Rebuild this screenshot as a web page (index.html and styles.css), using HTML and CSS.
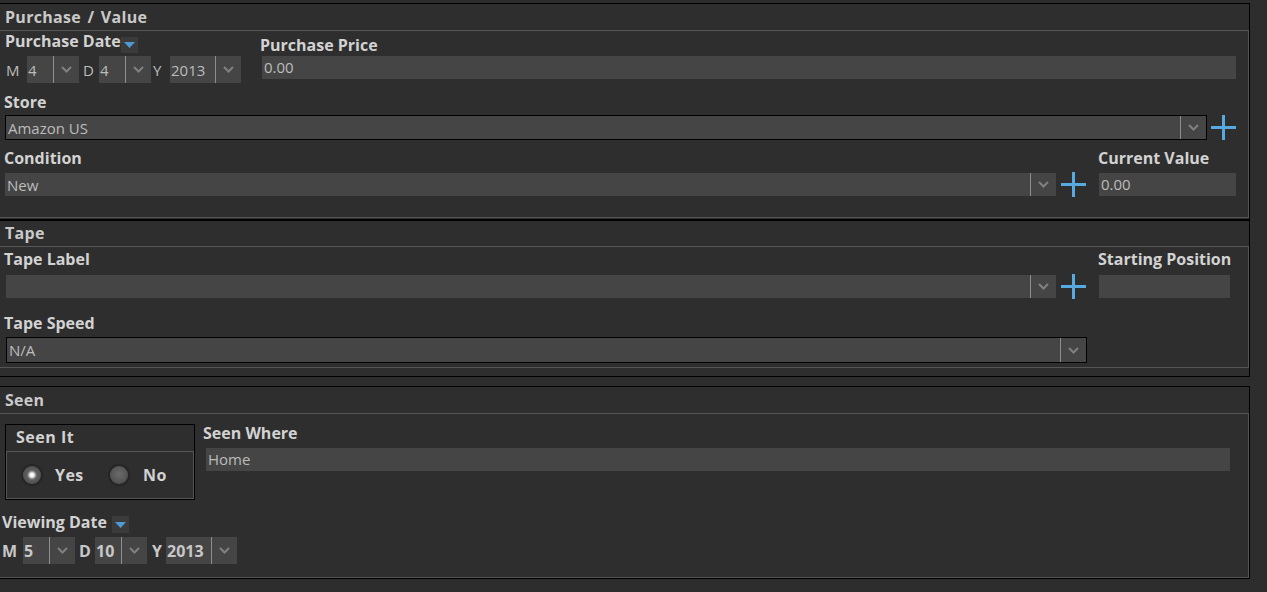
FILE: index.html
```html
<!DOCTYPE html>
<html>
<head>
<meta charset="utf-8">
<link rel="stylesheet" href="styles.css">
</head>
<body>
<section class="panel panel-purchase">
  <div class="panel-head">Purchase / Value</div>
  <div class="panel-body body-purchase">
    <div class="row-top">
      <div class="date-col">
        <div class="date-label">
          <span class="label">Purchase Date</span>
          <span class="tri-btn"><svg width="11" height="6" viewBox="0 0 11 6"><polygon points="0,0 11,0 5.5,6" fill="#4d9bd6"/></svg></span>
        </div>
        <div class="date-row">
          <span class="dl dl-m">M</span>
          <div class="dsel dsel-sm"><span class="dval">4</span><span class="arrow"><svg width="11" height="7" viewBox="0 0 11 7"><polyline points="1,1 5.5,5.5 10,1" fill="none" stroke="#808080" stroke-width="2"/></svg></span></div>
          <span class="dl dl-d">D</span>
          <div class="dsel dsel-sm"><span class="dval">4</span><span class="arrow"><svg width="11" height="7" viewBox="0 0 11 7"><polyline points="1,1 5.5,5.5 10,1" fill="none" stroke="#808080" stroke-width="2"/></svg></span></div>
          <span class="dl dl-y">Y</span>
          <div class="dsel dsel-lg"><span class="dval">2013</span><span class="arrow"><svg width="11" height="7" viewBox="0 0 11 7"><polyline points="1,1 5.5,5.5 10,1" fill="none" stroke="#808080" stroke-width="2"/></svg></span></div>
        </div>
      </div>
      <div class="price-col">
        <div class="label">Purchase Price</div>
        <div class="field field-price">0.00</div>
      </div>
    </div>

    <div class="label store-label">Store</div>
    <div class="store-row">
      <div class="select select-bordered"><span class="val">Amazon US</span><span class="arrow"><svg width="11" height="7" viewBox="0 0 11 7"><polyline points="1,1 5.5,5.5 10,1" fill="none" stroke="#808080" stroke-width="2"/></svg></span></div>
      <span class="plus"><svg width="25" height="25" viewBox="0 0 25 25"><rect x="0" y="11" width="25" height="3" fill="#58a9e0"/><rect x="11" y="0" width="3" height="25" fill="#58a9e0"/></svg></span>
    </div>

    <div class="split-row cond-row">
      <div class="left-col">
        <div class="label">Condition</div>
        <div class="sel-row">
          <div class="select"><span class="val">New</span><span class="arrow"><svg width="11" height="7" viewBox="0 0 11 7"><polyline points="1,1 5.5,5.5 10,1" fill="none" stroke="#808080" stroke-width="2"/></svg></span></div>
          <span class="plus"><svg width="25" height="25" viewBox="0 0 25 25"><rect x="0" y="11" width="25" height="3" fill="#58a9e0"/><rect x="11" y="0" width="3" height="25" fill="#58a9e0"/></svg></span>
        </div>
      </div>
      <div class="right-col">
        <div class="label">Current Value</div>
        <div class="field field-value">0.00</div>
      </div>
    </div>
  </div>
</section>

<section class="panel panel-tape">
  <div class="panel-head head-tape">Tape</div>
  <div class="panel-body body-tape">
    <div class="split-row tape-row">
      <div class="left-col tape-left">
        <div class="label">Tape Label</div>
        <div class="sel-row">
          <div class="select"><span class="val"></span><span class="arrow"><svg width="11" height="7" viewBox="0 0 11 7"><polyline points="1,1 5.5,5.5 10,1" fill="none" stroke="#808080" stroke-width="2"/></svg></span></div>
          <span class="plus"><svg width="25" height="25" viewBox="0 0 25 25"><rect x="0" y="11" width="25" height="3" fill="#58a9e0"/><rect x="11" y="0" width="3" height="25" fill="#58a9e0"/></svg></span>
        </div>
      </div>
      <div class="right-col">
        <div class="label">Starting Position</div>
        <div class="field field-start"></div>
      </div>
    </div>
    <div class="label speed-label">Tape Speed</div>
    <div class="select select-bordered select-speed"><span class="val">N/A</span><span class="arrow"><svg width="11" height="7" viewBox="0 0 11 7"><polyline points="1,1 5.5,5.5 10,1" fill="none" stroke="#808080" stroke-width="2"/></svg></span></div>
  </div>
</section>

<section class="panel panel-seen">
  <div class="panel-head">Seen</div>
  <div class="panel-body body-seen">
    <div class="seen-row">
      <div class="group">
        <div class="group-head">Seen It</div>
        <div class="group-body">
          <span class="opt opt-yes"><span class="radio radio-on"></span><span class="opt-text">Yes</span></span>
          <span class="opt opt-no"><span class="radio"></span><span class="opt-text">No</span></span>
        </div>
      </div>
      <div class="where-col">
        <div class="label">Seen Where</div>
        <div class="field field-where">Home</div>
      </div>
    </div>
    <div class="date-label view-label">
      <span class="label">Viewing Date</span>
      <span class="tri-btn tri-view"><svg width="11" height="6" viewBox="0 0 11 6"><polygon points="0,0 11,0 5.5,6" fill="#4d9bd6"/></svg></span>
    </div>
    <div class="date-row view-row">
      <span class="dl vdl-m">M</span>
      <div class="dsel dsel-sm"><span class="dval">5</span><span class="arrow"><svg width="11" height="7" viewBox="0 0 11 7"><polyline points="1,1 5.5,5.5 10,1" fill="none" stroke="#808080" stroke-width="2"/></svg></span></div>
      <span class="dl vdl-d">D</span>
      <div class="dsel dsel-sm"><span class="dval">10</span><span class="arrow"><svg width="11" height="7" viewBox="0 0 11 7"><polyline points="1,1 5.5,5.5 10,1" fill="none" stroke="#808080" stroke-width="2"/></svg></span></div>
      <span class="dl vdl-y">Y</span>
      <div class="dsel dsel-lg"><span class="dval">2013</span><span class="arrow"><svg width="11" height="7" viewBox="0 0 11 7"><polyline points="1,1 5.5,5.5 10,1" fill="none" stroke="#808080" stroke-width="2"/></svg></span></div>
    </div>
  </div>
</section>
</body>
</html>
```

FILE: styles.css
```css
* { box-sizing: border-box; }

body {
  margin: 0;
  padding-top: 3px;
  width: 1267px;
  height: 592px;
  overflow: hidden;
  background: #2d2d2d;
  font-family: "Open Sans", "Noto Sans", sans-serif;
  font-size: 15px;
  color: #d0d0d0;
}

.panel {
  width: 1250px;
  background: #2e2e2e;
  border-top: 1px solid #000;
  border-right: 1px solid #000;
  border-bottom: 1px solid #000;
}

.panel-head {
  height: 26px;
  line-height: 26px;
  padding-left: 5px;
  font-weight: 700;
  font-size: 16px;
  letter-spacing: 0.3px;
  word-spacing: 2px;
  color: #c9c9c9;
}
.head-tape { height: 25px; line-height: 25px; }

.panel-body {
  border-top: 1px solid #555;
  border-right: 1px solid #555;
  border-bottom: 1px solid #555;
}

.label {
  font-weight: 700;
  font-size: 16px;
  line-height: 20px;
  height: 20px;
  color: #d2d2d2;
  white-space: nowrap;
}

/* fields */
.field {
  height: 23px;
  background: #454545;
  color: #bcbcbc;
  line-height: 23px;
  padding-left: 2px;
}

.select {
  display: flex;
  height: 23px;
  background: #454545;
  color: #bcbcbc;
}
.select .val {
  flex: 1;
  padding-left: 2px;
  display: flex;
  align-items: center;
}
.select .arrow, .dsel .arrow {
  width: 26px;
  border-left: 1px solid #8e8e8e;
  display: flex;
  align-items: center;
  justify-content: center;
}
.select-bordered {
  height: 25px;
  border: 1px solid #000;
}

.plus {
  width: 25px;
  height: 23px;
  display: flex;
  align-items: center;
  justify-content: center;
  overflow: visible;
}
.plus svg { flex: none; overflow: visible; }

/* date pickers */
.date-label {
  display: flex;
  align-items: flex-start;
  height: 22px;
}
.tri-btn {
  width: 17px;
  height: 16px;
  margin-top: 6px;
  margin-left: 0;
  background: #3b3b3b;
  display: flex;
  align-items: center;
  justify-content: center;
}
.date-row {
  display: flex;
  height: 27px;
  align-items: stretch;
}
.dl {
  display: flex;
  align-items: center;
  color: #bcbcbc;
}
.dsel {
  display: flex;
  background: #454545;
  color: #bcbcbc;
}
.dsel .dval {
  flex: 1;
  display: flex;
  align-items: center;
  padding-left: 1px;
}
.dsel-sm { width: 52px; }
.dsel-lg { width: 71px; }

/* purchase panel */
.body-purchase {
  padding: 0 12px 21px 0;
  margin-bottom: 1px;
}
.row-top {
  display: flex;
  align-items: flex-start;
}
.date-col { width: 260px; }
.date-col .date-label { padding-left: 5px; margin-bottom: 3px; }
.dl-m { width: 27px; padding-left: 6px; }
.dl-d { width: 20px; padding-left: 4px; }
.dl-y { width: 19px; padding-left: 2px; }
.price-col { flex: 1; padding-top: 4px; }
.field-price { margin-top: 1px; margin-left: 2px; }

.store-label { margin-top: 9px; margin-left: 4px; }
.store-row {
  display: flex;
  margin-top: 3px;
  margin-left: 5px;
  gap: 4px;
}
.store-row .select { flex: 1; }
.store-row .plus { height: 25px; }

.split-row { display: flex; align-items: flex-start; }
.cond-row { margin-top: 8px; }
.left-col { flex: 1; margin-left: 5px; }
.left-col > .label { margin-left: -1px; }
.sel-row {
  display: flex;
  margin-top: 5px;
  gap: 5px;
}
.sel-row .select { flex: 1; }
.right-col { width: 138px; margin-left: 12px; }
.right-col .field { margin-top: 5px; margin-left: 1px; }
.field-start { width: 131px; }

/* tape panel */
.panel-tape { margin-bottom: 9px; }
.body-tape {
  padding: 2px 12px 4px 0;
  margin-bottom: 8px;
}
.tape-left { margin-left: 6px; }
.tape-left > .label { margin-left: -2px; }
.tape-row .sel-row { margin-top: 6px; }
.tape-row .right-col .field { margin-top: 6px; }
.speed-label { margin-top: 15px; margin-left: 4px; }
.select-speed {
  width: 1081px;
  height: 26px;
  margin-top: 4px;
  margin-left: 6px;
}

/* seen panel */
.body-seen { padding: 0 12px 13px 0; }
.seen-row { display: flex; align-items: flex-start; }
.group {
  width: 190px;
  margin-left: 5px;
  margin-top: 10px;
  border: 1px solid #000;
}
.group-head {
  height: 26px;
  line-height: 24px;
  padding-left: 10px;
  font-weight: 700;
  font-size: 16px;
  letter-spacing: 0.5px;
  color: #d2d2d2;
}
.group-body {
  height: 48px;
  border: 1px solid #555;
  display: flex;
  align-items: center;
  padding-left: 16px;
}
.opt { display: flex; align-items: center; }
.opt-yes { width: 87px; }
.opt-text { font-weight: 700; font-size: 16px; color: #d2d2d2; margin-left: 14px; letter-spacing: 0.4px; }
.opt-no .opt-text { margin-left: 15px; }
.radio {
  width: 18px;
  height: 18px;
  border-radius: 50%;
  background: radial-gradient(circle at 50% 45%, #6a6a6a 0%, #555 60%, #4a4a4a 100%);
  box-shadow: 0 0 0 2px #262626;
}
.radio-on {
  background: radial-gradient(circle at 50% 50%, #ffffff 0, #f2f2f2 2px, #9a9a9a 3.5px, #5e5e5e 5px, #555 60%, #4a4a4a 100%);
}

.where-col { flex: 1; margin-left: 8px; margin-top: 9px; }
.field-where { margin-top: 5px; margin-left: 3px; margin-right: 6px; }

.view-label { margin-top: 12px; padding-left: 2px; }
.tri-view { margin-top: 4px; height: 17px; margin-left: 5px; }
.view-row { margin-top: 3px; }
.view-row .dl, .view-row .dval { font-weight: 700; font-size: 16px; color: #c8c8c8; }
.vdl-m { width: 23px; padding-left: 2px; }
.vdl-d { width: 20px; padding-left: 4px; }
.vdl-y { width: 19px; padding-left: 5px; }
```
